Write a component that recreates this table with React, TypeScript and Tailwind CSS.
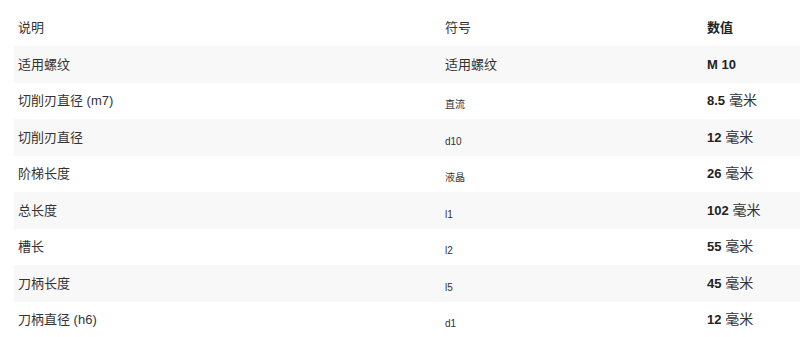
const ROWS = [
  { label: '适用螺纹', symbol: '适用螺纹', value: 'M 10', unit: '', big: true },
  { label: '切削刃直径 (m7)', symbol: '直流', value: '8.5', unit: '毫米' },
  { label: '切削刃直径', symbol: 'd10', value: '12', unit: '毫米' },
  { label: '阶梯长度', symbol: '液晶', value: '26', unit: '毫米' },
  { label: '总长度', symbol: 'l1', value: '102', unit: '毫米' },
  { label: '槽长', symbol: 'l2', value: '55', unit: '毫米' },
  { label: '刀柄长度', symbol: 'l5', value: '45', unit: '毫米' },
  { label: '刀柄直径 (h6)', symbol: 'd1', value: '12', unit: '毫米' },
];

export default function App() {
  return (
    <div
      className="w-[800px] h-[337px] overflow-hidden bg-white pt-[10px] pl-[14px] text-[13px] text-[#333]"
      style={{ fontFamily: '"Liberation Sans", "Noto Sans CJK SC", sans-serif' }}
    >
      {/* Header */}
      <div className="grid grid-cols-[427px_262px_97px] h-[36px] items-center">
        <div className="pl-[4px]">说明</div>
        <div className="pl-[4px]">符号</div>
        <div className="pl-[4px] font-bold text-[#222]">数值</div>
      </div>

      {/* Rows */}
      {ROWS.map((row, i) => (
        <div
          key={i}
          className={`grid grid-cols-[427px_262px_97px] h-[36.5px] items-center ${
            i % 2 === 0 ? 'bg-[#f8f8f8]' : 'bg-white'
          }`}
        >
          <div className="pl-[4px]">{row.label}</div>
          {row.big ? (
            <div className="pl-[4px]">{row.symbol}</div>
          ) : (
            <div className="pl-[4px] pt-[6px]">
              <span className="text-[10px]">{row.symbol}</span>
            </div>
          )}
          <div className="pl-[4px] whitespace-nowrap">
            <span className="font-bold text-[#222]">{row.value}</span>
            {row.unit && <span className="text-[14px]"> {row.unit}</span>}
          </div>
        </div>
      ))}
    </div>
  );
}
